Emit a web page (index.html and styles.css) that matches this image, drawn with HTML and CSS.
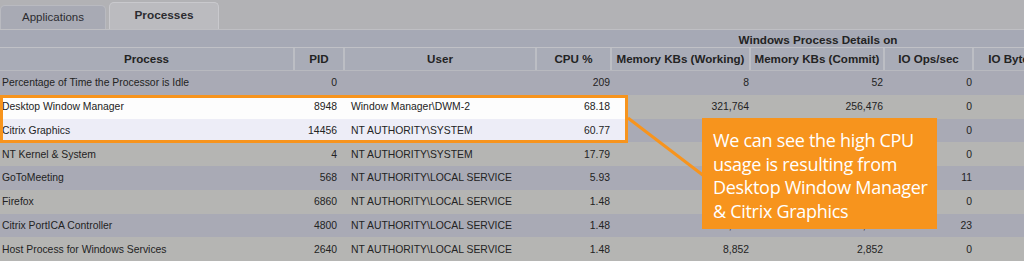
FILE: index.html
```html
<!DOCTYPE html>
<html lang="en">
<head>
  <meta charset="UTF-8">
  <meta name="viewport" content="width=device-width, initial-scale=1.0">
  <title>Processes</title>
  <link rel="stylesheet" href="styles.css">
</head>
<body>
  <div class="screen">
    <div class="tabs">
      <div class="tab">Applications</div>
      <div class="tab active">Processes</div>
    </div>

    <div class="group">
      <span class="group-spacer"></span>
      <span class="group-title">Windows Process Details on</span>
    </div>

    <div class="row head">
      <div class="c">Process</div>
      <div class="c">PID</div>
      <div class="c">User</div>
      <div class="c">CPU %</div>
      <div class="c">Memory KBs (Working)</div>
      <div class="c">Memory KBs (Commit)</div>
      <div class="c">IO Ops/sec</div>
      <div class="c">IO Bytes/sec</div>
    </div>

    <div class="row alt">
      <div class="c name">Percentage of Time the Processor is Idle</div>
      <div class="c pid">0</div>
      <div class="c user"></div>
      <div class="c cpu">209</div>
      <div class="c mem">8</div>
      <div class="c commit">52</div>
      <div class="c io">0</div>
      <div class="c"></div>
    </div>
    <div class="row hl-first">
      <div class="c name">Desktop Window Manager</div>
      <div class="c pid">8948</div>
      <div class="c user">Window Manager\DWM-2</div>
      <div class="c cpu">68.18</div>
      <div class="c mem">321,764</div>
      <div class="c commit">256,476</div>
      <div class="c io">0</div>
      <div class="c"></div>
    </div>
    <div class="row hl-second">
      <div class="c name">Citrix Graphics</div>
      <div class="c pid">14456</div>
      <div class="c user">NT AUTHORITY\SYSTEM</div>
      <div class="c cpu">60.77</div>
      <div class="c mem"></div>
      <div class="c commit"></div>
      <div class="c io">0</div>
      <div class="c"></div>
    </div>
    <div class="row">
      <div class="c name">NT Kernel &amp; System</div>
      <div class="c pid">4</div>
      <div class="c user">NT AUTHORITY\SYSTEM</div>
      <div class="c cpu">17.79</div>
      <div class="c mem"></div>
      <div class="c commit"></div>
      <div class="c io">0</div>
      <div class="c"></div>
    </div>
    <div class="row alt">
      <div class="c name">GoToMeeting</div>
      <div class="c pid">568</div>
      <div class="c user">NT AUTHORITY\LOCAL SERVICE</div>
      <div class="c cpu">5.93</div>
      <div class="c mem"></div>
      <div class="c commit"></div>
      <div class="c io">11</div>
      <div class="c"></div>
    </div>
    <div class="row">
      <div class="c name">Firefox</div>
      <div class="c pid">6860</div>
      <div class="c user">NT AUTHORITY\LOCAL SERVICE</div>
      <div class="c cpu">1.48</div>
      <div class="c mem"></div>
      <div class="c commit"></div>
      <div class="c io">0</div>
      <div class="c"></div>
    </div>
    <div class="row alt">
      <div class="c name">Citrix PortICA Controller</div>
      <div class="c pid">4800</div>
      <div class="c user">NT AUTHORITY\LOCAL SERVICE</div>
      <div class="c cpu">1.48</div>
      <div class="c mem">30,256</div>
      <div class="c commit">11,700</div>
      <div class="c io">23</div>
      <div class="c"></div>
    </div>
    <div class="row">
      <div class="c name">Host Process for Windows Services</div>
      <div class="c pid">2640</div>
      <div class="c user">NT AUTHORITY\LOCAL SERVICE</div>
      <div class="c cpu">1.48</div>
      <div class="c mem">8,852</div>
      <div class="c commit">2,852</div>
      <div class="c io">0</div>
      <div class="c"></div>
    </div>

    <!-- annotation on top of the table -->
    <div class="highlight"></div>
    <svg class="connector" width="1024" height="261" viewBox="0 0 1024 261">
      <line x1="628" y1="118" x2="704" y2="176" stroke="#f7941d" stroke-width="3"/>
    </svg>
    <div class="callout">
      We can see the high CPU<br>
      usage is resulting from<br>
      Desktop Window Manager<br>
      &amp; Citrix Graphics
    </div>
  </div>
</body>
</html>
```

FILE: styles.css
```css
body {
  margin: 0;
  background: #b2b2b5;
  font-family: "Liberation Sans", Arial, sans-serif;
  color: #232323;
}

.screen {
  position: relative;
  width: 1024px;
  height: 261px;
  overflow: hidden;
  background: #b2b2b5;
}

.tabs {
  display: flex;
  align-items: flex-end;
  gap: 3px;
  height: 29px;
  border-bottom: 1px solid #bfbfc3;
}

.tab {
  width: 106px;
  height: 24px;
  line-height: 22px;
  text-align: center;
  font-size: 11.5px;
  color: #2c2c30;
  background: #a8aab4;
  border: 1px solid #b9bac0;
  border-bottom: none;
  border-radius: 5px 5px 0 0;
  box-sizing: border-box;
}

.tab.active {
  width: 110px;
  height: 27px;
  line-height: 25px;
  background: #bbbbbf;
  border-color: #c9c9cd;
  font-weight: bold;
  font-size: 11.8px;
}

.group {
  display: flex;
  height: 17px;
  background: #a6a9b5;
  border-bottom: 1px solid #c0c1c6;
  font-size: 11.7px;
  font-weight: bold;
  line-height: 19px;
}

.group-spacer {
  width: 612px;
}

.group-title {
  width: 412px;
  text-align: center;
}

.row {
  display: grid;
  grid-template-columns: 295px 50px 192px 75px 139px 134px 89px 100px;
  height: 23.75px;
  align-items: center;
  font-size: 10.4px;
  background: #b5b5b3;
  white-space: nowrap;
}

.row.alt {
  background: #a9aab5;
}

.row.head {
  height: 22px;
  background: #a9acb7;
  border-bottom: 1px solid #b8b9bf;
  font-size: 11.6px;
  font-weight: bold;
  align-items: stretch;
}

.row.head .c {
  text-align: center;
  line-height: 22px;
  border-right: 2px solid #bcbec4;
}

.row.hl-first {
  background: linear-gradient(to right, #fdfdfd 628px, #b5b5b3 628px);
}

.row.hl-second {
  background: linear-gradient(to right, #ededf7 628px, #a9aab5 628px);
}

.c {
  overflow: hidden;
}

.name {
  padding-left: 2px;
}

.user {
  padding-left: 6px;
}

.pid {
  text-align: right;
  padding-right: 8px;
}

.cpu,
.mem,
.commit,
.io {
  text-align: right;
  padding-right: 2px;
}

.highlight {
  position: absolute;
  left: 0;
  top: 95px;
  width: 628px;
  height: 48px;
  border: 3px solid #f7941d;
  box-sizing: border-box;
}

.connector {
  position: absolute;
  left: 0;
  top: 0;
}

.callout {
  position: absolute;
  left: 702px;
  top: 118px;
  width: 235px;
  height: 111px;
  box-sizing: border-box;
  padding: 11px 0 0 11px;
  background: #f7941d;
  color: #fff;
  font-family: "Open Sans", sans-serif;
  font-size: 18px;
  letter-spacing: -0.3px;
  line-height: 23.7px;
}
```
